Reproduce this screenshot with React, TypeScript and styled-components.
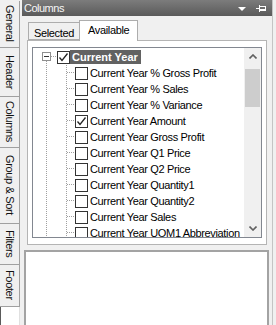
import React from "react";
import styled, { createGlobalStyle } from "styled-components";

const Global = createGlobalStyle`
  html, body { margin: 0; padding: 0; background: #f0f0f0; overflow: hidden; }
  body { font-family: "Liberation Sans", Arial, sans-serif; }
`;

const Frame = styled.div`
  display: flex;
  width: 276px;
  height: 325px;
  overflow: hidden;
  background: #f0f0f0;
  font-family: "Liberation Sans", Arial, sans-serif;
  font-size: 11px;
  color: #000;
`;

const SideStrip = styled.div`
  width: 20px;
  flex: none;
  display: flex;
  flex-direction: column;
  padding-top: 1px;
  box-sizing: border-box;
`;

const SideTab = styled.div<{ $h: number }>`
  height: ${(p) => p.$h}px;
  flex: none;
  box-sizing: border-box;
  border-right: 1px solid #a0a0a0;
  border-bottom: 1px solid #a0a0a0;
  background: #f0f0f0;
  writing-mode: vertical-rl;
  display: flex;
  align-items: center;
  justify-content: center;
  padding-bottom: 1px;
  letter-spacing: -0.35px;
  white-space: nowrap;
  color: #111;
`;

const StripFill = styled.div`
  flex: 1;
  background: #fff;
  border-left: 1px solid #5a5a5a;
  border-right: 1px solid #e0e0e0;
`;

const Main = styled.div`
  margin-left: 2px;
  width: 250px;
  flex: none;
  display: flex;
  flex-direction: column;
  border-right: 1px solid #c4c4c4;
`;

const TitleBar = styled.div`
  height: 16px;
  flex: none;
  display: flex;
  align-items: center;
  background: linear-gradient(#7c7c7c, #5a5a5a);
  color: #f6f6f6;
  padding: 0 6px 0 2px;
`;

const Title = styled.span`
  flex: 1;
  letter-spacing: -0.5px;
  line-height: 16px;
`;

const DropIcon = styled.svg`
  width: 8px;
  height: 5px;
  margin-right: 10px;
  margin-top: 3px;
`;

const PinIcon = styled.svg`
  width: 10px;
  height: 8px;
  margin-top: -1px;
`;

const TabRow = styled.div`
  height: 24px;
  flex: none;
  display: flex;
  align-items: flex-end;
  padding-left: 6px;
`;

const Tab = styled.div<{ $active?: boolean }>`
  position: relative;
  box-sizing: border-box;
  border: 1px solid #adadad;
  border-bottom: ${(p) => (p.$active ? "none" : "1px solid #adadad")};
  background: ${(p) => (p.$active ? "#fff" : "#f0f0f0")};
  height: ${(p) => (p.$active ? 21 : 18)}px;
  margin-bottom: ${(p) => (p.$active ? -1 : 0)}px;
  margin-left: ${(p) => (p.$active ? -2 : 0)}px;
  padding: ${(p) => (p.$active ? "3px 8px 0 8px" : "4px 6px 0 5px")};
  line-height: 12px;
  letter-spacing: -0.35px;
  z-index: ${(p) => (p.$active ? 1 : 0)};
`;

const TabPage = styled.div`
  margin-left: 5px;
  width: 240px;
  height: 205px;
  flex: none;
  box-sizing: border-box;
  border: 1px solid #b4b4b4;
  background: #fff;
  padding: 6px 4px;
`;

const TreeBox = styled.div`
  width: 230px;
  height: 191px;
  box-sizing: border-box;
  border: 1px solid #828790;
  background: #fff;
  display: flex;
`;

const TreeList = styled.div`
  flex: 1;
  min-width: 0;
  overflow: hidden;
  padding-top: 1px;
`;

const Row = styled.div`
  height: 16px;
  display: flex;
  align-items: center;
  white-space: nowrap;
`;

const Lines = styled.svg`
  flex: none;
  height: 16px;
  display: block;
`;

const Check = styled.span`
  width: 13px;
  height: 13px;
  flex: none;
  box-sizing: border-box;
  border: 1px solid #333;
  background: #fff;
  display: flex;
  align-items: center;
  justify-content: center;
`;

const Label = styled.span<{ $selected?: boolean }>`
  margin-left: ${(p) => (p.$selected ? 0 : 2)}px;
  padding: ${(p) => (p.$selected ? "0 3px 0 2px" : "0")};
  line-height: 14px;
  font-weight: ${(p) => (p.$selected ? "bold" : "normal")};
  letter-spacing: ${(p) => (p.$selected ? "0" : "-0.35px")};
  background: ${(p) => (p.$selected ? "#626262" : "transparent")};
  color: ${(p) => (p.$selected ? "#fff" : "#000")};
`;

const ScrollBar = styled.div`
  width: 17px;
  flex: none;
  background: #f0f0f0;
  display: flex;
  flex-direction: column;
`;

const ScrollBtn = styled.div`
  height: 17px;
  flex: none;
  display: flex;
  align-items: center;
  justify-content: center;
`;

const Track = styled.div`
  flex: 1;
  padding: 4px 1px 0 1px;
`;

const Thumb = styled.div`
  height: 38px;
  background: #cdcdcd;
`;

const DetailBox = styled.div`
  margin: 5px 0 0 2px;
  width: 245px;
  height: 100px;
  flex: none;
  box-sizing: border-box;
  border: 2px solid #a3a3a3;
  background: #fff;
`;

const dot = { stroke: "#a0a0a0", strokeWidth: 1, strokeDasharray: "1 1", shapeRendering: "crispEdges" as const };

const CheckMark = () => (
  <svg width="11" height="11" viewBox="0 0 11 11">
    <polyline points="1.5,5.5 4,8.5 9.5,1.5" fill="none" stroke="#222" strokeWidth="1.3" />
  </svg>
);

const sideTabs: [string, number][] = [
  ["General", 47],
  ["Header", 49],
  ["Columns", 51],
  ["Group & Sort", 76],
  ["Filters", 41],
  ["Footer", 42],
];

const children: [string, boolean][] = [
  ["Current Year % Gross Profit", false],
  ["Current Year % Sales", false],
  ["Current Year % Variance", false],
  ["Current Year Amount", true],
  ["Current Year Gross Profit", false],
  ["Current Year Q1 Price", false],
  ["Current Year Q2 Price", false],
  ["Current Year Quantity1", false],
  ["Current Year Quantity2", false],
  ["Current Year Sales", false],
  ["Current Year UOM1 Abbreviation", false],
];

export default function App() {
  return (
    <Frame>
      <Global />
      <SideStrip>
        {sideTabs.map(([t, h]) => (
          <SideTab key={t} $h={h}>
            {t}
          </SideTab>
        ))}
        <StripFill />
      </SideStrip>
      <Main>
        <TitleBar>
          <Title>Columns</Title>
          <DropIcon viewBox="0 0 8 5">
            <polygon points="0,0 8,0 4,4" fill="#fff" />
          </DropIcon>
          <PinIcon viewBox="0 0 10 8">
            <g stroke="#fff" strokeWidth="1" fill="none" shapeRendering="crispEdges">
              <line x1="0" y1="4.5" x2="3" y2="4.5" />
              <line x1="3.5" y1="1" x2="3.5" y2="8" />
              <rect x="3.5" y="2.5" width="6" height="4" />
              <line x1="4" y1="5.5" x2="9" y2="5.5" />
            </g>
          </PinIcon>
        </TitleBar>
        <TabRow>
          <Tab>Selected</Tab>
          <Tab $active>Available</Tab>
        </TabRow>
        <TabPage>
          <TreeBox>
            <TreeList>
              <Row>
                <Lines width="24" viewBox="0 0 24 16">
                  <line x1="13.5" y1="12" x2="13.5" y2="16" {...dot} />
                  <line x1="18" y1="7.5" x2="24" y2="7.5" {...dot} />
                  <rect x="9.5" y="3.5" width="8" height="8" fill="#fff" stroke="#8f8f8f" shapeRendering="crispEdges" />
                  <line x1="11" y1="7.5" x2="16" y2="7.5" stroke="#333" shapeRendering="crispEdges" />
                </Lines>
                <Check>
                  <CheckMark />
                </Check>
                <Label $selected>Current Year</Label>
              </Row>
              {children.map(([t, c]) => (
                <Row key={t}>
                  <Lines width="42" viewBox="0 0 42 16">
                    <line x1="13.5" y1="0" x2="13.5" y2="16" {...dot} />
                    <line x1="33.5" y1="0" x2="33.5" y2="16" {...dot} />
                    <line x1="34" y1="7.5" x2="42" y2="7.5" {...dot} />
                  </Lines>
                  <Check>{c && <CheckMark />}</Check>
                  <Label>{t}</Label>
                </Row>
              ))}
            </TreeList>
            <ScrollBar>
              <ScrollBtn>
                <svg width="8" height="5" viewBox="0 0 8 5">
                  <polyline points="0.5,4.5 4,1 7.5,4.5" fill="none" stroke="#606060" strokeWidth="1.6" />
                </svg>
              </ScrollBtn>
              <Track>
                <Thumb />
              </Track>
              <ScrollBtn>
                <svg width="8" height="5" viewBox="0 0 8 5">
                  <polyline points="0.5,0.5 4,4 7.5,0.5" fill="none" stroke="#606060" strokeWidth="1.6" />
                </svg>
              </ScrollBtn>
            </ScrollBar>
          </TreeBox>
        </TabPage>
        <DetailBox />
      </Main>
    </Frame>
  );
}
